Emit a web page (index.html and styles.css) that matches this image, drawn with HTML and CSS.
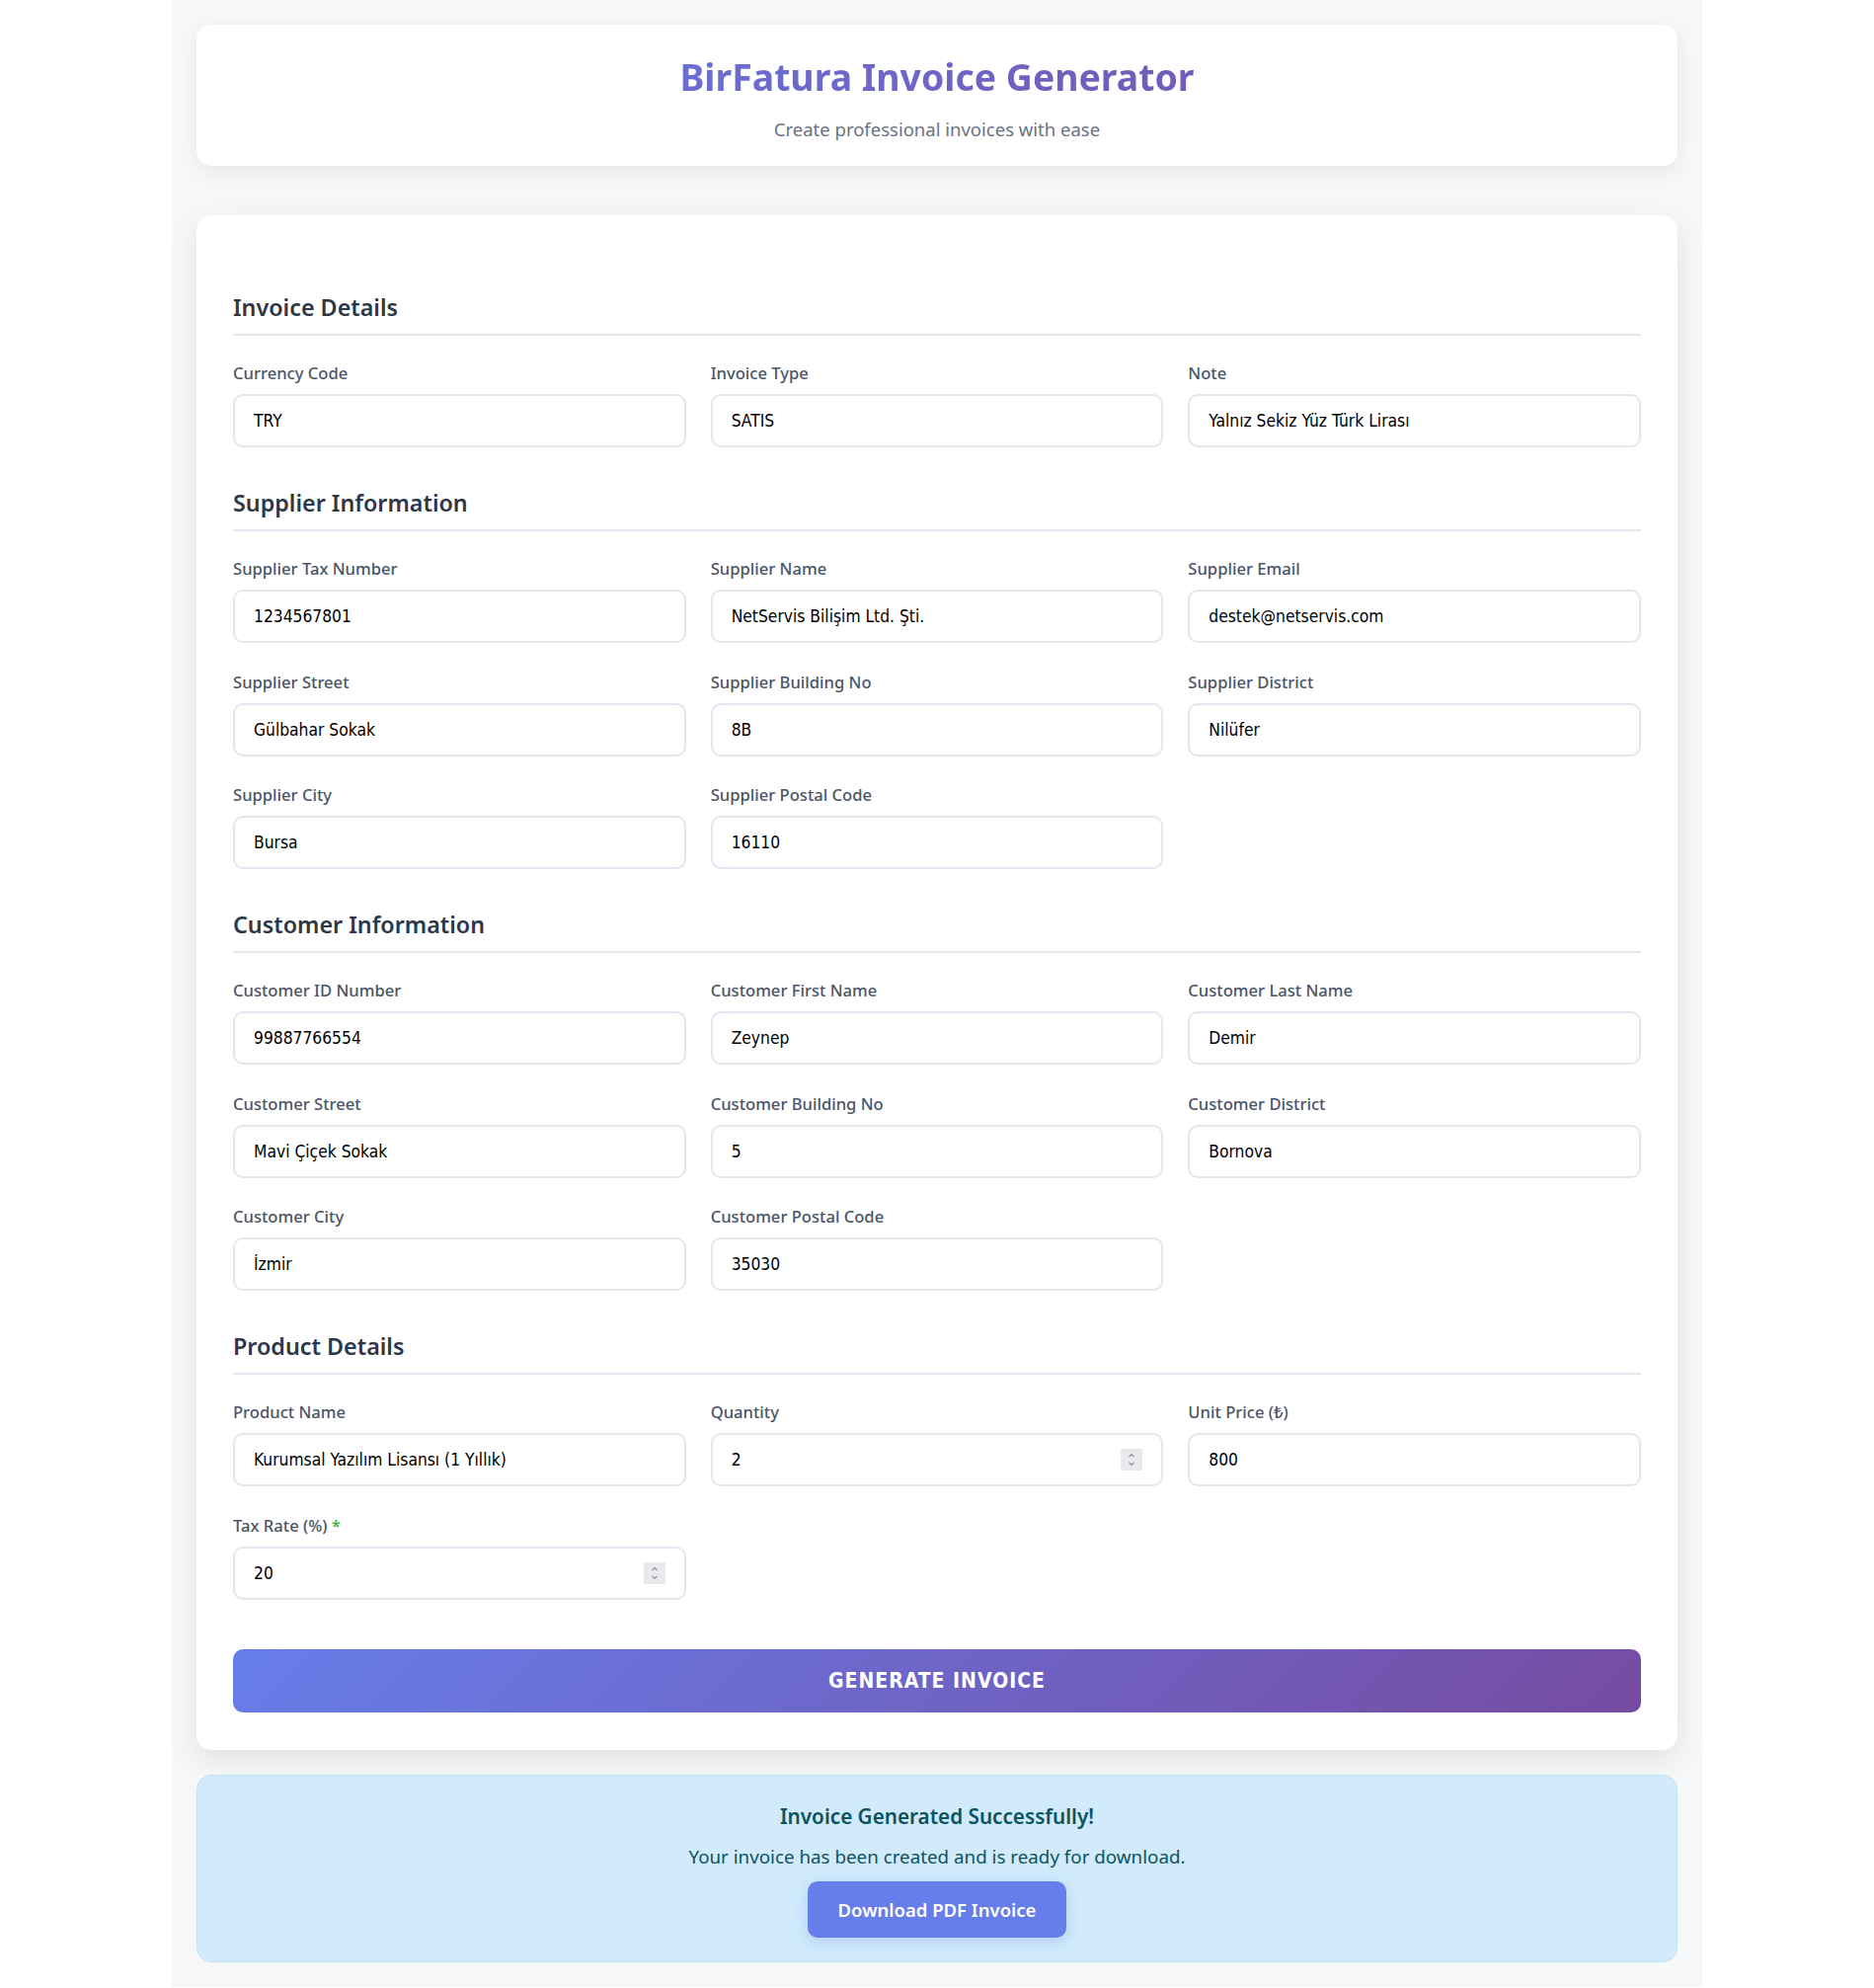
FILE: index.html
```html
<!DOCTYPE html>
<html lang="en">
<head>
<meta charset="utf-8">
<title>BirFatura Invoice Generator</title>
<link rel="stylesheet" href="styles.css">
</head>
<body>
<div class="container">
  <header class="header-card">
    <h1 class="title">BirFatura Invoice Generator</h1>
    <p class="subtitle">Create professional invoices with ease</p>
  </header>

  <form class="form-card">
    <section class="section">
      <h2 class="section-title">Invoice Details</h2>
      <div class="grid">
        <div class="field"><label class="label">Currency Code</label><input class="input" type="text" value="TRY"></div>
        <div class="field"><label class="label">Invoice Type</label><input class="input" type="text" value="SATIS"></div>
        <div class="field"><label class="label">Note</label><input class="input" type="text" value="Yalnız Sekiz Yüz Türk Lirası" lang="tr"></div>
      </div>
    </section>

    <section class="section">
      <h2 class="section-title">Supplier Information</h2>
      <div class="grid">
        <div class="field"><label class="label">Supplier Tax Number</label><input class="input" type="text" value="1234567801"></div>
        <div class="field"><label class="label">Supplier Name</label><input class="input" type="text" value="NetServis Bilişim Ltd. Şti." lang="tr"></div>
        <div class="field"><label class="label">Supplier Email</label><input class="input" type="text" value="destek@netservis.com"></div>
        <div class="field"><label class="label">Supplier Street</label><input class="input" type="text" value="Gülbahar Sokak" lang="tr"></div>
        <div class="field"><label class="label">Supplier Building No</label><input class="input" type="text" value="8B"></div>
        <div class="field"><label class="label">Supplier District</label><input class="input" type="text" value="Nilüfer" lang="tr"></div>
        <div class="field"><label class="label">Supplier City</label><input class="input" type="text" value="Bursa"></div>
        <div class="field"><label class="label">Supplier Postal Code</label><input class="input" type="text" value="16110"></div>
      </div>
    </section>

    <section class="section">
      <h2 class="section-title">Customer Information</h2>
      <div class="grid">
        <div class="field"><label class="label">Customer ID Number</label><input class="input" type="text" value="99887766554"></div>
        <div class="field"><label class="label">Customer First Name</label><input class="input" type="text" value="Zeynep"></div>
        <div class="field"><label class="label">Customer Last Name</label><input class="input" type="text" value="Demir"></div>
        <div class="field"><label class="label">Customer Street</label><input class="input" type="text" value="Mavi Çiçek Sokak" lang="tr"></div>
        <div class="field"><label class="label">Customer Building No</label><input class="input" type="text" value="5"></div>
        <div class="field"><label class="label">Customer District</label><input class="input" type="text" value="Bornova"></div>
        <div class="field"><label class="label">Customer City</label><input class="input" type="text" value="İzmir" lang="tr"></div>
        <div class="field"><label class="label">Customer Postal Code</label><input class="input" type="text" value="35030"></div>
      </div>
    </section>

    <section class="section">
      <h2 class="section-title">Product Details</h2>
      <div class="grid">
        <div class="field"><label class="label">Product Name</label><input class="input" type="text" value="Kurumsal Yazılım Lisansı (1 Yıllık)" lang="tr"></div>
        <div class="field"><label class="label">Quantity</label>
          <div class="input-wrap">
            <input class="input" type="text" value="2">
            <span class="spinner"><svg width="22" height="22" viewBox="0 0 22 22"><path d="M8.5 8.2 L11 5.7 L13.5 8.2" fill="none" stroke="#8e8e97" stroke-width="1.2"/><path d="M8.5 13.8 L11 16.3 L13.5 13.8" fill="none" stroke="#8e8e97" stroke-width="1.2"/></svg></span>
          </div>
        </div>
        <div class="field"><label class="label">Unit Price (₺)</label><input class="input" type="text" value="800"></div>
        <div class="field"><label class="label">Tax Rate (%) <span class="required">*</span></label>
          <div class="input-wrap">
            <input class="input" type="text" value="20">
            <span class="spinner"><svg width="22" height="22" viewBox="0 0 22 22"><path d="M8.5 8.2 L11 5.7 L13.5 8.2" fill="none" stroke="#8e8e97" stroke-width="1.2"/><path d="M8.5 13.8 L11 16.3 L13.5 13.8" fill="none" stroke="#8e8e97" stroke-width="1.2"/></svg></span>
          </div>
        </div>
      </div>
    </section>

    <button class="generate-btn" type="button">GENERATE INVOICE</button>
  </form>

  <div class="success-box">
    <h3 class="success-title">Invoice Generated Successfully!</h3>
    <p class="success-text">Your invoice has been created and is ready for download.</p>
    <button class="download-btn" type="button">Download PDF Invoice</button>
  </div>
</div>
</body>
</html>
```
FILE: styles.css
```css
* { box-sizing: border-box; }

html, body {
  margin: 0;
  padding: 0;
  background: #ffffff;
}

body {
  font-family: "Noto Sans", "Open Sans", sans-serif;
  color: #2d3748;
}

.container {
  max-width: 1550px;
  margin: 0 auto;
  background: #f6f7f9;
  padding: 25px 25px 25px;
}

.header-card {
  background: #ffffff;
  border-radius: 15px;
  box-shadow: 0 5px 20px rgba(0, 0, 0, 0.07);
  padding: 28px 37px 25px;
  text-align: center;
  margin-bottom: 50px;
}

.title {
  margin: 0;
  font-size: 37.4px;
  line-height: 50px;
  font-weight: 700;
  background: linear-gradient(135deg, #667eea 0%, #764ba2 100%);
  -webkit-background-clip: text;
  background-clip: text;
  color: transparent;
}

.subtitle {
  margin: 16px 0 0;
  font-size: 18.5px;
  line-height: 24px;
  color: #6b7280;
}

.form-card {
  background: #ffffff;
  border-radius: 15px;
  box-shadow: 0 10px 30px rgba(0, 0, 0, 0.09);
  padding: 37px 37px 38px;
}

.section-title {
  margin: 40px 0 26px;
  padding-bottom: 11px;
  border-bottom: 2px solid #e2e8f0;
  font-size: 23.3px;
  line-height: 32px;
  font-weight: 600;
  color: #2d3748;
}

.grid {
  display: grid;
  grid-template-columns: repeat(3, 1fr);
  column-gap: 25px;
  row-gap: 27.5px;
}

.label {
  display: block;
  margin-bottom: 9px;
  font-size: 16.6px;
  line-height: 24px;
  font-weight: 500;
  color: #4a5568;
}

.required {
  color: #2fb344;
}

.input-wrap {
  position: relative;
}

.input {
  display: block;
  width: 100%;
  height: 54px;
  padding: 0 19px;
  border: 2px solid #e2e8f0;
  border-radius: 10px;
  background: #ffffff;
  font-family: "DejaVu Sans Condensed", "DejaVu Sans", sans-serif;
  font-stretch: condensed;
  font-size: 17.3px;
  color: #000000;
  outline: none;
}

.spinner {
  position: absolute;
  right: 21px;
  top: 16px;
  width: 22px;
  height: 22px;
  background: #e9e9ed;
  display: flex;
}

.generate-btn {
  display: block;
  width: 100%;
  height: 64px;
  margin-top: 50px;
  border: none;
  border-radius: 10px;
  background: linear-gradient(135deg, #667eea 0%, #764ba2 100%);
  color: #ffffff;
  font-family: "DejaVu Sans Condensed", "DejaVu Sans", sans-serif;
  font-stretch: condensed;
  font-weight: 700;
  font-size: 21px;
  letter-spacing: 1px;
  cursor: pointer;
}

.success-box {
  margin-top: 25px;
  padding: 26px 25px 24px;
  background: #d1ebfc;
  border: 1px solid #bee5eb;
  border-radius: 15px;
  text-align: center;
}

.success-title {
  margin: 0 0 13px;
  font-size: 20.7px;
  line-height: 30px;
  font-weight: 600;
  color: #0c5460;
}

.success-text {
  margin: 0 0 12px;
  font-size: 18.8px;
  line-height: 26px;
  color: #0c5460;
}

.download-btn {
  height: 57px;
  padding: 0 31px;
  border: none;
  border-radius: 10px;
  background: #667eea;
  color: #ffffff;
  font-family: "Noto Sans", "Open Sans", sans-serif;
  font-size: 18.5px;
  font-weight: 600;
  box-shadow: 0 4px 15px rgba(102, 126, 234, 0.3);
  cursor: pointer;
}
```
